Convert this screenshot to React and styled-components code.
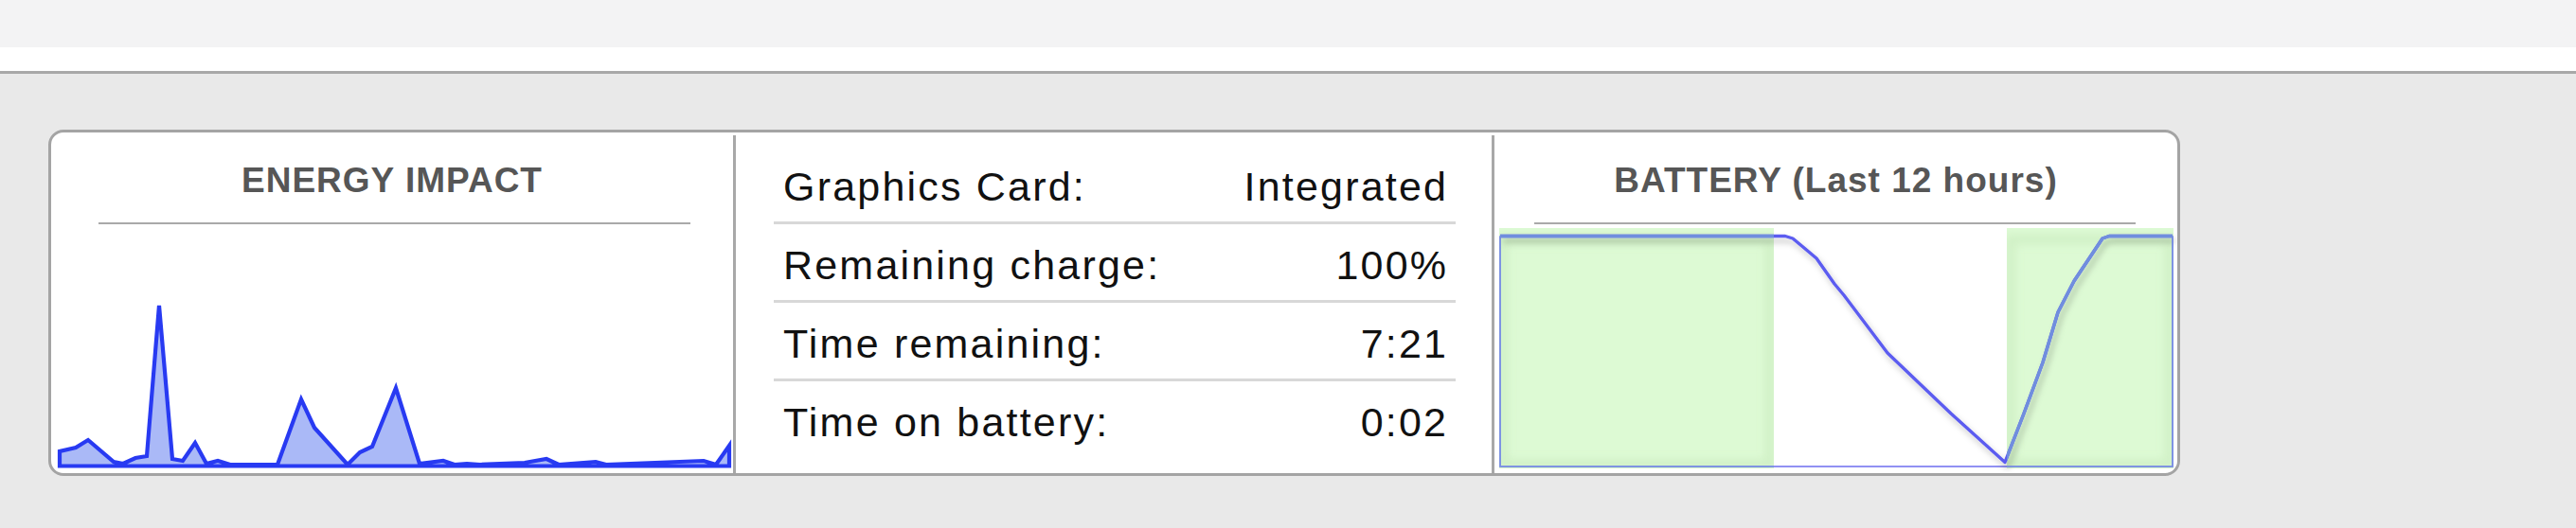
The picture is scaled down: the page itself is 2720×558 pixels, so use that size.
import * as React from 'react';
import styled, { createGlobalStyle } from 'styled-components';

const GlobalStyle = createGlobalStyle`
  html, body {
    margin: 0;
    padding: 0;
    background-color: rgb(233,233,233);
    font-family: 'Liberation Sans', Arial, sans-serif;
  }
`

const TopBar = styled.div`
  height: 50px;
  background-color: rgb(243,243,244);
`
const SubBar = styled.div`
  height: 25px;
  background-color: #fff;
  border-bottom: 3px solid rgb(168,168,168);
`
const Main = styled.main`
  padding: 59px 0 0 51px;
`
const Card = styled.section`
  width: 2251px;
  height: 366px;
  box-sizing: border-box;
  display: flex;
  background-color: #fff;
  border: 3px solid rgb(164,164,164);
  border-radius: 16px;
  overflow: hidden;
`
const Divider = styled.div`
  width: 3px;
  margin-top: 3px;
  background-color: rgb(168,168,168);
`
const GraphPanel = styled.div`
  width: ${props => props.$width}px;
  display: flex;
  flex-direction: column;
`
const PanelTitle = styled.h2`
  margin: 0;
  padding-top: 32px;
  height: 37px;
  font-family: 'Liberation Sans', Arial, sans-serif;
  font-weight: 700;
  font-size: 37px;
  line-height: 37px;
  letter-spacing: 1px;
  color: rgb(86,86,86);
  text-align: center;
  white-space: nowrap;
`
const TitleRule = styled.div`
  margin: 26px 0 0 ${props => props.$left}px;
  width: ${props => props.$width}px;
  height: 2px;
  background-color: rgb(169,169,169);
`
const Chart = styled.svg`
  display: block;
`
const InfoPanel = styled.div`
  width: 798px;
  box-sizing: border-box;
  padding: 14px 38px 0 40px;
`
const InfoRow = styled.div`
  height: 74px;
  padding: 6px 10px 0;
  display: flex;
  align-items: center;
  justify-content: space-between;
  border-bottom: ${props => props.$last ? 'none' : '3px solid rgb(216,216,216)'};
  font-family: 'Liberation Sans', Arial, sans-serif;
  font-size: 43px;
  line-height: 43px;
  letter-spacing: 2.2px;
  color: rgb(17,17,17);
  white-space: nowrap;
`
const InfoValue = styled.span`
  margin-right: -2.2px;
`

const energyPoints = [
  [9, 240], [26, 236], [39, 228], [66, 251], [76, 253], [89, 247], [101, 245],
  [114, 86], [128, 248], [139, 250], [152, 231], [164, 253], [176, 250], [189, 254],
  [239, 254], [264, 185], [278, 215], [313, 254], [326, 241], [339, 235], [364, 173],
  [389, 253], [414, 250], [426, 254], [439, 253], [453, 254], [500, 252], [523, 248],
  [536, 254], [575, 251], [586, 254], [689, 250], [702, 254], [716, 234],
];

const batteryPoints = [
  [6, 12.5], [307, 12.5], [315, 15], [327, 25], [340, 36], [359, 63], [369, 75],
  [415, 136], [482, 200], [539, 251.5], [559, 200], [579, 146], [595, 93],
  [612, 60], [642, 15], [649, 12.5], [716, 12.5],
];

const toPts = list => list.map(p => p.join(',')).join(' ');

const rows = [
  ['Graphics Card:', 'Integrated'],
  ['Remaining charge:', '100%'],
  ['Time remaining:', '7:21'],
  ['Time on battery:', '0:02'],
];

function EnergyChart() {
  const area = `9,255.5 ${toPts(energyPoints)} 716,255.5`;
  return (
    <Chart width="720" height="263" viewBox="0 0 720 263">
      <polygon points={area} fill="rgb(170,185,247)" stroke="rgb(40,58,242)" strokeWidth="4.2" strokeLinejoin="miter" strokeMiterlimit="10" />
    </Chart>
  );
}

function BatteryChart() {
  const greens = [[5, 290], [541, 176]];
  return (
    <Chart width="721" height="263" viewBox="0 0 721 263">
      <defs>
        <filter id="lineShadow" x="-10%" y="-10%" width="130%" height="140%">
          <feDropShadow dx="3" dy="5" stdDeviation="3" floodColor="#000" floodOpacity="0.25" />
        </filter>
        <filter id="soft">
          <feGaussianBlur stdDeviation="5" />
        </filter>
        <clipPath id="greens">
          {greens.map(([x, w]) => <rect key={x} x={x} y="4" width={w} height="254" />)}
        </clipPath>
      </defs>
      {greens.map(([x, w]) => (
        <rect key={x} x={x} y="4" width={w} height="254" fill="rgb(221,250,212)" />
      ))}
      <g clipPath="url(#greens)">
        {greens.map(([x, w]) => (
          <rect key={x} x={x + 4} y="16" width={w - 8} height="238" fill="none" stroke="rgba(160,205,145,0.22)" strokeWidth="10" filter="url(#soft)" />
        ))}
      </g>
      <polyline points="6,12.5 6,256 716,256 716,12.5" fill="none" stroke="rgb(110,110,240)" strokeWidth="1.6" />
      <polyline points={toPts(batteryPoints)} fill="none" stroke="rgb(92,92,240)" strokeWidth="3.4" strokeLinejoin="round" filter="url(#lineShadow)" />
      <g clipPath="url(#greens)">
        <polyline points="6,12.5 6,256 716,256 716,12.5" fill="none" stroke="rgb(125,150,225)" strokeWidth="1.6" />
        <polyline points={toPts(batteryPoints)} fill="none" stroke="rgb(112,142,222)" strokeWidth="3.4" strokeLinejoin="round" />
      </g>
    </Chart>
  );
}

export default function App() {
  return (
    <>
      <GlobalStyle />
      <TopBar />
      <SubBar />
      <Main>
        <Card>
          <GraphPanel $width={720}>
            <PanelTitle>ENERGY IMPACT</PanelTitle>
            <TitleRule $left={50} $width={625} />
            <EnergyChart />
          </GraphPanel>
          <Divider />
          <InfoPanel>
            {rows.map(([label, value], i) => (
              <InfoRow key={label} $last={i === rows.length - 1}>
                <span>{label}</span>
                <InfoValue>{value}</InfoValue>
              </InfoRow>
            ))}
          </InfoPanel>
          <Divider />
          <GraphPanel $width={721}>
            <PanelTitle>BATTERY (Last 12 hours)</PanelTitle>
            <TitleRule $left={42} $width={635} />
            <BatteryChart />
          </GraphPanel>
        </Card>
      </Main>
    </>
  );
}
